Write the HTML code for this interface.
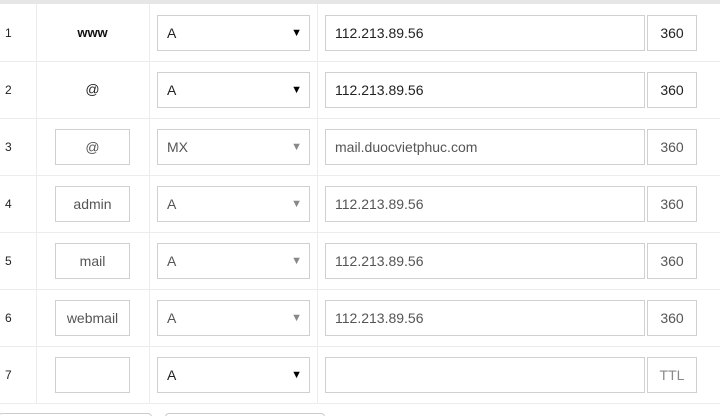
<!DOCTYPE html>
<html><head><style>
*{box-sizing:border-box;margin:0;padding:0}
html,body{width:720px;height:416px;overflow:hidden}
body{background:#fff;font-family:"Liberation Sans",sans-serif;font-size:14px;color:#222;position:relative}
.top{position:absolute;left:0;top:0;width:720px;height:4px;background:#e6e6e6}
.vl{position:absolute;top:4px;height:399px;width:1px;background:#ececec}
.hl{position:absolute;left:0;width:720px;height:1px;background:#ececec}
.b{position:absolute;border:1px solid #d0d0d0;background:#fff;height:36px;line-height:34px;padding-left:9px}
.c{text-align:center;padding-left:0}
.g{color:#555}
.n{position:absolute;left:5px;font-size:12px;color:#222}
.ar{position:absolute;right:7px;top:0;font-size:11px}
.t{position:absolute;width:113px;left:36px;text-align:center}
.btn{position:absolute;top:413px;height:20px;border:1px solid #ccc;border-radius:4px}
</style></head><body>
<div class="top"></div>
<div class="vl" style="left:36px"></div><div class="vl" style="left:149px"></div><div class="vl" style="left:317px"></div>
<div class="hl" style="top:61px"></div><div class="hl" style="top:118px"></div><div class="hl" style="top:175px"></div><div class="hl" style="top:232px"></div><div class="hl" style="top:289px"></div><div class="hl" style="top:346px"></div><div class="hl" style="top:403px"></div>

<div class="n" style="top:26px">1</div>
<div class="t" style="top:25px;font-size:13px;font-weight:bold;color:#111">www</div>
<div class="b" style="left:157px;top:15px;width:153px">A<span class="ar" style="color:#000">▼</span></div>
<div class="b" style="left:325px;top:15px;width:320px">112.213.89.56</div>
<div class="b c" style="left:647px;top:15px;width:50px">360</div>

<div class="n" style="top:83px">2</div>
<div class="t" style="top:81px">@</div>
<div class="b" style="left:157px;top:72px;width:153px">A<span class="ar" style="color:#000">▼</span></div>
<div class="b" style="left:325px;top:72px;width:320px">112.213.89.56</div>
<div class="b c" style="left:647px;top:72px;width:50px">360</div>

<div class="n" style="top:140px">3</div>
<div class="b c g" style="left:55px;top:129px;width:75px">@</div>
<div class="b g" style="left:157px;top:129px;width:153px">MX<span class="ar" style="color:#888">▼</span></div>
<div class="b g" style="left:325px;top:129px;width:320px">mail.duocvietphuc.com</div>
<div class="b c g" style="left:647px;top:129px;width:50px">360</div>

<div class="n" style="top:197px">4</div>
<div class="b c g" style="left:55px;top:186px;width:75px">admin</div>
<div class="b g" style="left:157px;top:186px;width:153px">A<span class="ar" style="color:#888">▼</span></div>
<div class="b g" style="left:325px;top:186px;width:320px">112.213.89.56</div>
<div class="b c g" style="left:647px;top:186px;width:50px">360</div>

<div class="n" style="top:254px">5</div>
<div class="b c g" style="left:55px;top:243px;width:75px">mail</div>
<div class="b g" style="left:157px;top:243px;width:153px">A<span class="ar" style="color:#888">▼</span></div>
<div class="b g" style="left:325px;top:243px;width:320px">112.213.89.56</div>
<div class="b c g" style="left:647px;top:243px;width:50px">360</div>

<div class="n" style="top:311px">6</div>
<div class="b c g" style="left:55px;top:300px;width:75px">webmail</div>
<div class="b g" style="left:157px;top:300px;width:153px">A<span class="ar" style="color:#888">▼</span></div>
<div class="b g" style="left:325px;top:300px;width:320px">112.213.89.56</div>
<div class="b c g" style="left:647px;top:300px;width:50px">360</div>

<div class="n" style="top:368px">7</div>
<div class="b c" style="left:55px;top:357px;width:75px"></div>
<div class="b" style="left:157px;top:357px;width:153px">A<span class="ar" style="color:#000">▼</span></div>
<div class="b" style="left:325px;top:357px;width:320px"></div>
<div class="b c" style="left:647px;top:357px;width:50px;color:#888">TTL</div>

<div class="btn" style="left:-2px;width:154px"></div>
<div class="btn" style="left:165px;width:160px"></div>
</body></html>
